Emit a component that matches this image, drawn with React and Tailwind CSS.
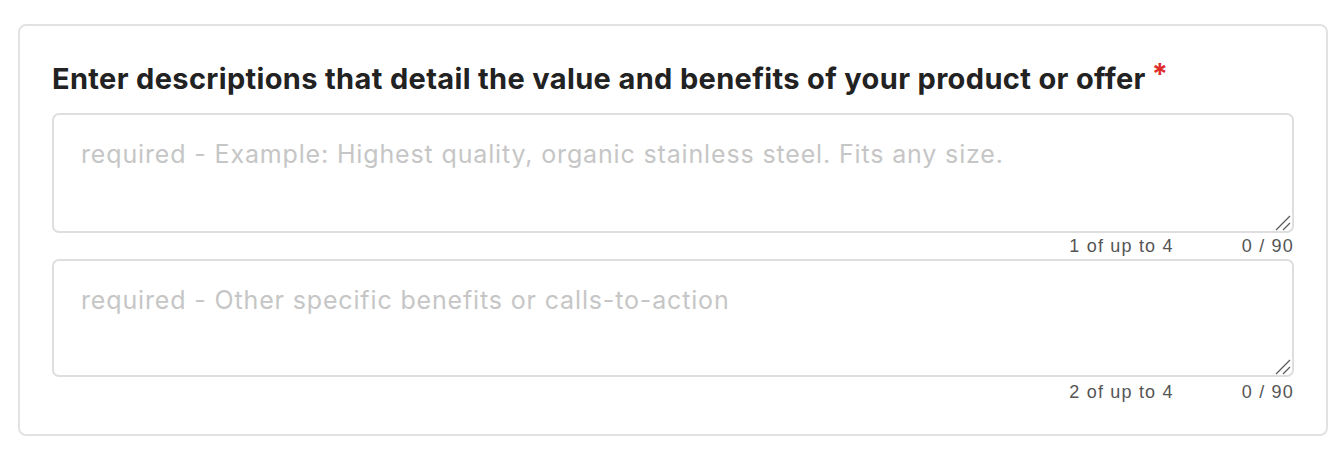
import React from "react";

const fields = [
  { placeholder: "required - Example: Highest quality, organic stainless steel. Fits any size.", index: 1, h: "h-[120px]", mt: "mt-[2px]" },
  { placeholder: "required - Other specific benefits or calls-to-action", index: 2, h: "h-[118px]", mt: "mt-[4px]" },
];

const helv = { fontFamily: "'Liberation Sans', Arial, sans-serif" };

function ResizeGrip() {
  return (
    <svg className="pointer-events-none absolute right-[3px] bottom-[2px]" width="16" height="16" viewBox="0 0 16 16" fill="none">
      <path d="M1 15 L15 1" stroke="#5a5a5a" strokeWidth="1.3" />
      <path d="M8 15 L15 8" stroke="#5a5a5a" strokeWidth="1.3" />
    </svg>
  );
}

function DescriptionField({ placeholder, index, h, mt }) {
  return (
    <div>
      <div className="relative">
        <textarea
          placeholder={placeholder}
          className={`block w-full ${h} resize-none rounded-[7px] border-2 border-[#dedede] bg-white pl-[27px] pr-[26px] pt-[24px] text-[25px] leading-[30px] tracking-[0.85px] text-[#222] placeholder:text-[#c6c6c6] outline-none`}
        />
        <ResizeGrip />
      </div>
      <div style={helv} className={`${mt} flex justify-end gap-[68px] text-[18px] leading-[22px] tracking-[1.2px] text-[#555]`}>
        <span>{index} of up to 4</span>
        <span>0 / 90</span>
      </div>
    </div>
  );
}

export default function App() {
  return (
    <div className="min-h-screen bg-white pt-[24px] pl-[18px]" style={{ fontFamily: "Inter, 'Noto Sans', sans-serif" }}>
      <div className="w-[1310px] rounded-[8px] border-2 border-[#e2e2e2] px-[32px] pt-[35px] pb-[31px]">
        <h1 className="mb-[16px] text-[29px] leading-[36px] font-bold tracking-[0.35px] text-[#222]">
          Enter descriptions that detail the value and benefits of your product or offer
          <span className="relative -top-[5px] ml-[6px] text-[#e02b2b]">*</span>
        </h1>
        <div className="flex flex-col gap-[2px]">
          {fields.map((f) => (
            <DescriptionField key={f.index} {...f} />
          ))}
        </div>
      </div>
    </div>
  );
}
